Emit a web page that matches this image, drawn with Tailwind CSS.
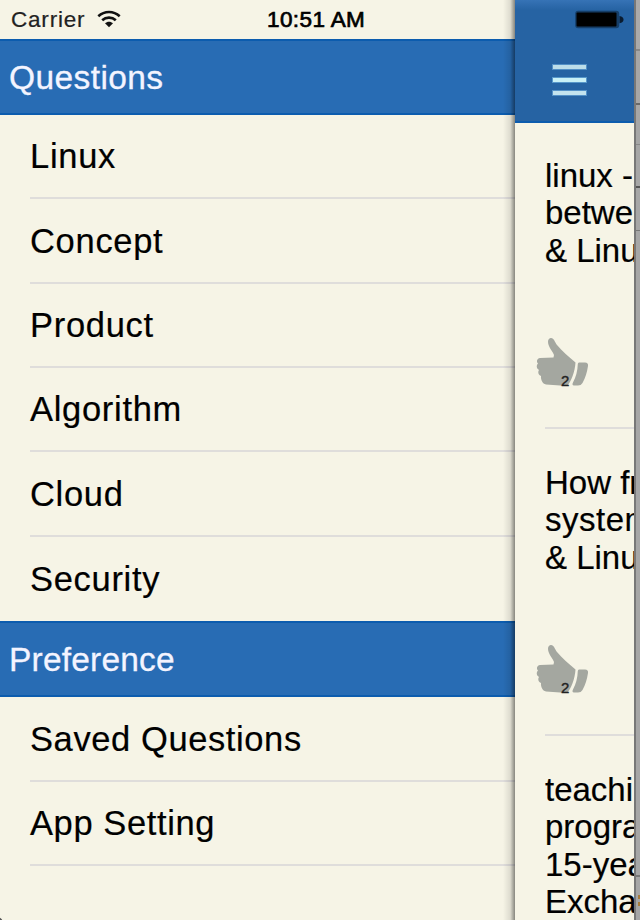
<!DOCTYPE html>
<html lang="en">
<head>
<meta charset="utf-8">
<title>Questions</title>
<script src="https://cdn.jsdelivr.net/npm/@tailwindcss/browser@4"></script>
</head>
<body class="overflow-hidden bg-[#f6f4e6]">
<div class="relative flex h-[920px] w-[640px] overflow-hidden bg-[#f6f4e6] font-['Liberation_Sans',Arial,sans-serif] text-black">

  <!-- Side menu -->
  <nav class="flex w-[515px] shrink-0 flex-col">
    <div class="flex h-[39px] items-center pl-[11px]">
      <span class="w-[86px] pt-px text-[22.500px] leading-none tracking-[0.8px] text-[#222] [-webkit-text-stroke:0.2px_#222]">Carrier</span>
      <svg class="-mt-[2px] h-[18px] w-6" viewBox="0 0 24 18" fill="none" stroke="#111" stroke-width="2.6">
        <path d="M1.3 6.2C7.5.6 16.500.6 22.700 6.200M5.200 10.300C9 6.700 15 6.700 18.800 10.300"/>
        <path d="M8 13.300C10.200 11.200 13.800 11.200 16 13.300L12 17.200Z" fill="#111" stroke="none"/>
      </svg>
      <span class="ml-[146px] whitespace-nowrap pt-px text-[22.500px] leading-none tracking-[0.4px] [-webkit-text-stroke:0.7px_#000]">10:51 AM</span>
    </div>
    <h2 class="flex h-[75.500px] items-center border-y-2 border-[#0c5cae] bg-[#286cb4] pl-[9px] pt-px text-[33.500px] leading-none tracking-[0.4px] text-[#f3f4ff] [-webkit-text-stroke:0.3px_#f3f4ff]">Questions</h2>
    <ul class="h-[506.500px] pl-[30px] pt-[0.500px] text-[34.500px] leading-none tracking-[0.7px] [-webkit-text-stroke:0.2px_#000]">
      <li class="flex h-[84.350px] items-center border-b-2 border-[#dfdddb] pt-px">Linux</li>
      <li class="flex h-[84.350px] items-center border-b-2 border-[#dfdddb] pt-px">Concept</li>
      <li class="flex h-[84.350px] items-center border-b-2 border-[#dfdddb] pt-px">Product</li>
      <li class="flex h-[84.350px] items-center border-b-2 border-[#dfdddb] pt-px">Algorithm</li>
      <li class="flex h-[84.350px] items-center border-b-2 border-[#dfdddb] pt-px">Cloud</li>
      <li class="flex h-[84.350px] items-center">Security</li>
    </ul>
    <h2 class="flex h-[76px] items-center border-y-2 border-[#0c5cae] bg-[#286cb4] pl-[9px] pt-px text-[33.500px] leading-none tracking-[0.200px] text-[#f3f4ff] [-webkit-text-stroke:0.3px_#f3f4ff]">Preference</h2>
    <ul class="pl-[30px] pt-[0.500px] text-[34.500px] leading-none tracking-[0.6px] [-webkit-text-stroke:0.2px_#000]">
      <li class="flex h-[84.350px] items-center border-b-2 border-[#dfdddb] pt-px">Saved Questions</li>
      <li class="flex h-[84.350px] items-center border-b-2 border-[#dfdddb] pt-px">App Setting</li>
    </ul>
  </nav>

  <!-- Sliding content panel -->
  <main class="relative flex w-[119px] shrink-0 flex-col overflow-hidden rounded-br-[5px] bg-[#f6f4e6]">
    <header class="flex h-[122.500px] shrink-0 flex-col border-b-2 border-[#0c5cae] bg-linear-to-b from-[#3673b6] to-[#2663a3] to-[10px]">
      <div class="flex h-[39px] items-center pl-[60px]">
        <svg class="h-5 w-[50px]" viewBox="0 0 50 20">
          <rect x=".2" y=".8" width="44" height="17.500" rx="3" fill="#163e68"/>
          <rect x="1.500" y="2.500" width="40" height="14" rx="1" fill="#000"/>
          <path d="M44.500 6Q48.500 6.500 48.500 9.600Q48.500 12.800 44.500 13.300Z" fill="#0a1c30"/>
        </svg>
      </div>
      <div class="flex flex-col gap-[7px] pl-[37px] pt-[25px]">
        <i class="block h-[6px] w-[35px] border border-[#0c5cae]/60 bg-[#bcdde9]"></i>
        <i class="block h-[6px] w-[35px] border border-[#0c5cae]/60 bg-[#c9f0f6]"></i>
        <i class="block h-[6px] w-[35px] border border-[#0c5cae]/60 bg-[#c3e3ef]"></i>
      </div>
    </header>
    <article class="h-[307px] shrink-0 pl-[30px] pt-[34px]">
      <p class="h-[180px] whitespace-nowrap text-[33px] leading-[37.500px] [-webkit-text-stroke:0.2px_#000]">linux -<br>betwe<br>&amp; Linu</p>
      <div class="relative -ml-[9px] h-[91px]">
        <svg class="h-[50px] w-[53px]" viewBox="0 0 53 50" fill="#a4a7a0">
          <path d="M15 1C11.500 1.500 11.500 5 13 9C14 12 17 15 18 18L17.500 20.500L4 21C1 21.500 0 24.500 2 26.500C0 28.500 .5 31.500 3 33C1.500 35 2.500 38 5 39C4.500 42 6.500 47 10 47.500L31 49C35 45 39 35 39.500 25.500C33 20 26 14 21 8C19 5.500 18 1 15 1Z"/>
          <path d="M43 25.500H49Q52.500 25.500 52 29Q50.500 39 46.500 46Q45 48.500 42 48.500H38Q35.500 48 37 45.500Q41.500 37 41.800 27Q42 25.500 43 25.500Z"/>
        </svg>
        <span class="absolute left-[25px] top-[36px] text-[15px] leading-none text-[#222] [-webkit-text-stroke:0.4px_#222]">2</span>
      </div>
      <div class="-mt-px h-0.5 bg-[#dfdddb]"></div>
    </article>
    <article class="h-[307px] shrink-0 pl-[30px] pt-[34px]">
      <p class="h-[180px] whitespace-nowrap text-[33px] leading-[37.500px] [-webkit-text-stroke:0.2px_#000]">How fr<br><span class="tracking-[0.5px]">system</span><br>&amp; Linu</p>
      <div class="relative -ml-[9px] h-[91px]">
        <svg class="h-[50px] w-[53px]" viewBox="0 0 53 50" fill="#a4a7a0">
          <path d="M15 1C11.500 1.500 11.500 5 13 9C14 12 17 15 18 18L17.500 20.500L4 21C1 21.500 0 24.500 2 26.500C0 28.500 .5 31.500 3 33C1.500 35 2.500 38 5 39C4.500 42 6.500 47 10 47.500L31 49C35 45 39 35 39.500 25.500C33 20 26 14 21 8C19 5.500 18 1 15 1Z"/>
          <path d="M43 25.500H49Q52.500 25.500 52 29Q50.500 39 46.500 46Q45 48.500 42 48.500H38Q35.500 48 37 45.500Q41.500 37 41.800 27Q42 25.500 43 25.500Z"/>
        </svg>
        <span class="absolute left-[25px] top-[36px] text-[15px] leading-none text-[#222] [-webkit-text-stroke:0.4px_#222]">2</span>
      </div>
      <div class="-mt-px h-0.5 bg-[#dfdddb]"></div>
    </article>
    <article class="shrink-0 pl-[30px] pt-[34px]">
      <p class="whitespace-nowrap text-[33px] leading-[37.500px] [-webkit-text-stroke:0.2px_#000]">teachi<br>progra<br>15-yea<br>Excha</p>
    </article>
  </main>

  <!-- Strip visible past the panel edge -->
  <aside class="flex grow flex-col border-l-2 border-[#777] bg-[#a6a6a6]">
    <div class="h-[51px] border-b-2 border-[#888] bg-[#aaa]"></div>
    <div class="h-[54px] border-b-2 border-[#686868]"></div>
    <div class="h-[40px] border-b border-[#888]"></div>
    <div class="h-[43px] border-b-2 border-[#555]"></div>
    <div class="h-[43px] border-b border-[#777]"></div>
    <div class="h-[646px] border-b-2 border-[#777]"></div>
    <div class="ml-0.5 mt-[18px] h-[11px] w-0.5 border-y-4 border-[#a77b3b]"></div>
  </aside>

  <!-- Panel shadow and window corner -->
  <div class="absolute left-[503px] top-0 h-full w-[12px] bg-linear-to-r from-transparent via-black/10 via-60% to-black/45"></div>
  <div class="absolute -left-[3px] top-[917px] size-[6px] rounded-tr-full bg-[#555]"></div>
</div>
</body>
</html>
